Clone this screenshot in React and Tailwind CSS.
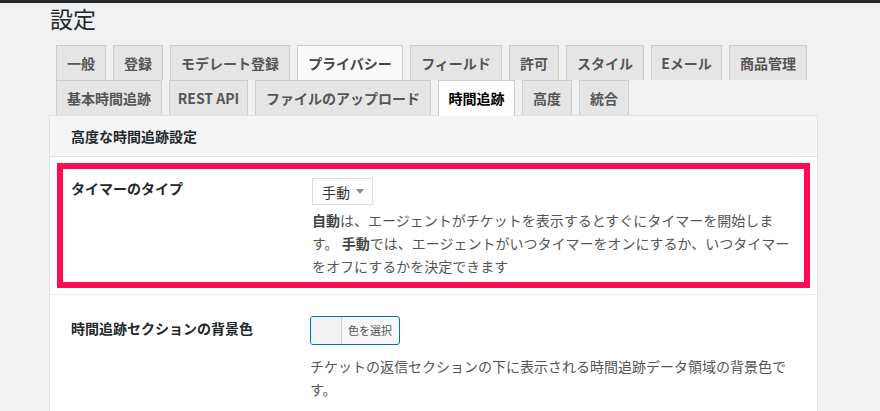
import React from "react";

const row1 = [
  { label: "一般", w: "w-[50px]" },
  { label: "登録", w: "w-[50px]" },
  { label: "モデレート登録", w: "w-[120px]" },
  { label: "プライバシー", w: "w-[106px]", hover: true },
  { label: "フィールド", w: "w-[92px]" },
  { label: "許可", w: "w-[50px]" },
  { label: "スタイル", w: "w-[78px]" },
  { label: "Eメール", w: "w-[71px]" },
  { label: "商品管理", w: "w-[78px]" },
];

const row2 = [
  { label: "基本時間追跡", w: "w-[106px]" },
  { label: "REST API", w: "w-[79px]" },
  { label: "ファイルのアップロード", w: "w-[176px]" },
  { label: "時間追跡", w: "w-[77px]", active: true },
  { label: "高度", w: "w-[50px]" },
  { label: "統合", w: "w-[50px]" },
];

function Tab({ label, w, active, hover }) {
  if (active) {
    return (
      <div
        className={`${w} relative z-10 mb-[-1px] h-[36px] whitespace-nowrap border border-b-0 border-[#ccc] bg-white pt-[5px] text-center text-[14px] font-bold leading-[24px] text-black`}
      >
        {label}
      </div>
    );
  }
  return (
    <div
      className={`${w} h-[35px] whitespace-nowrap border border-b-0 border-[#ccc] pt-[5px] text-center text-[14px] font-bold leading-[24px] ${
        hover ? "bg-[#f9f9f9] text-[#444]" : "bg-[#e5e5e5] text-[#555]"
      }`}
    >
      {label}
    </div>
  );
}

export default function App() {
  return (
    <div
      className="h-[411px] overflow-hidden bg-[#f1f1f1]"
      style={{ fontFamily: '"Noto Sans CJK JP", "Noto Sans", sans-serif' }}
    >
      <div className="h-[3px] bg-[#23282d]" />
      <div className="pl-[49px]">
        <h1 className="pl-[1px] text-[23px] font-normal leading-[30px] text-[#23282d]">設定</h1>

        {/* tabs */}
        <div className="mt-[12px] pl-[7px]">
          <div className="flex gap-[7px]">
            {row1.map((t) => (
              <Tab key={t.label} {...t} />
            ))}
          </div>
          <div className="flex items-end gap-[7px]">
            {row2.map((t) => (
              <Tab key={t.label} {...t} />
            ))}
          </div>
        </div>

        {/* panel */}
        <div className="w-[769px] border border-[#e1e1e1] bg-white">
          <div className="h-[41px] border-b border-[#e1e1e1] bg-[#f5f5f5] pl-[21px] text-[14px] font-bold leading-[40px] text-[#23282d]">
            高度な時間追跡設定
          </div>

          {/* timer type */}
          <div className="border-b border-[#eee] px-[7px] py-[6px]">
            <div className="flex border-[6px] border-[#ff0a54] pb-[4px] pl-[8px] pt-[9px]">
              <div className="w-[241px] shrink-0 text-[14px] font-bold leading-[20px] text-[#23282d]">
                タイマーのタイプ
              </div>
              <div>
                <div className="flex h-[27px] w-[61px] items-center justify-between border border-[#ddd] bg-white pl-[9px] pr-[8px] text-[14px] text-[#333]">
                  <span className="leading-[20px]">手動</span>
                  <svg width="8" height="5" viewBox="0 0 8 5">
                    <path d="M0 0h8L4 5z" fill="#888" />
                  </svg>
                </div>
                <p className="mt-[4px] text-[14px] leading-[23px] text-[#555]">
                  <b className="font-bold text-[#444]">自動</b>は、エージェントがチケットを表示するとすぐにタイマーを開始しま
                  <br />
                  す。 <b className="font-bold text-[#444]">手動</b>では、エージェントがいつタイマーをオンにするか、いつタイマー
                  <br />
                  をオフにするかを決定できます
                </p>
              </div>
            </div>
          </div>

          {/* background colour */}
          <div className="flex pb-[40px] pl-[21px] pt-[21px]">
            <div className="w-[239px] shrink-0 pt-[2px] text-[14px] font-bold leading-[20px] text-[#23282d]">
              時間追跡セクションの背景色
            </div>
            <div>
              <div className="flex h-[29px] w-[90px] overflow-hidden rounded-[3px] border border-[#0073aa] bg-[#f7f7f7]">
                <span className="w-[31px] border-r border-[#ccc] bg-[#f1f1f1]" />
                <span className="px-[6px] text-[11px] leading-[27px] text-[#555]">色を選択</span>
              </div>
              <p className="mt-[10px] text-[14px] leading-[23px] text-[#555]">
                チケットの返信セクションの下に表示される時間追跡データ領域の背景色で
                <br />
                す。
              </p>
            </div>
          </div>
        </div>
      </div>
    </div>
  );
}
